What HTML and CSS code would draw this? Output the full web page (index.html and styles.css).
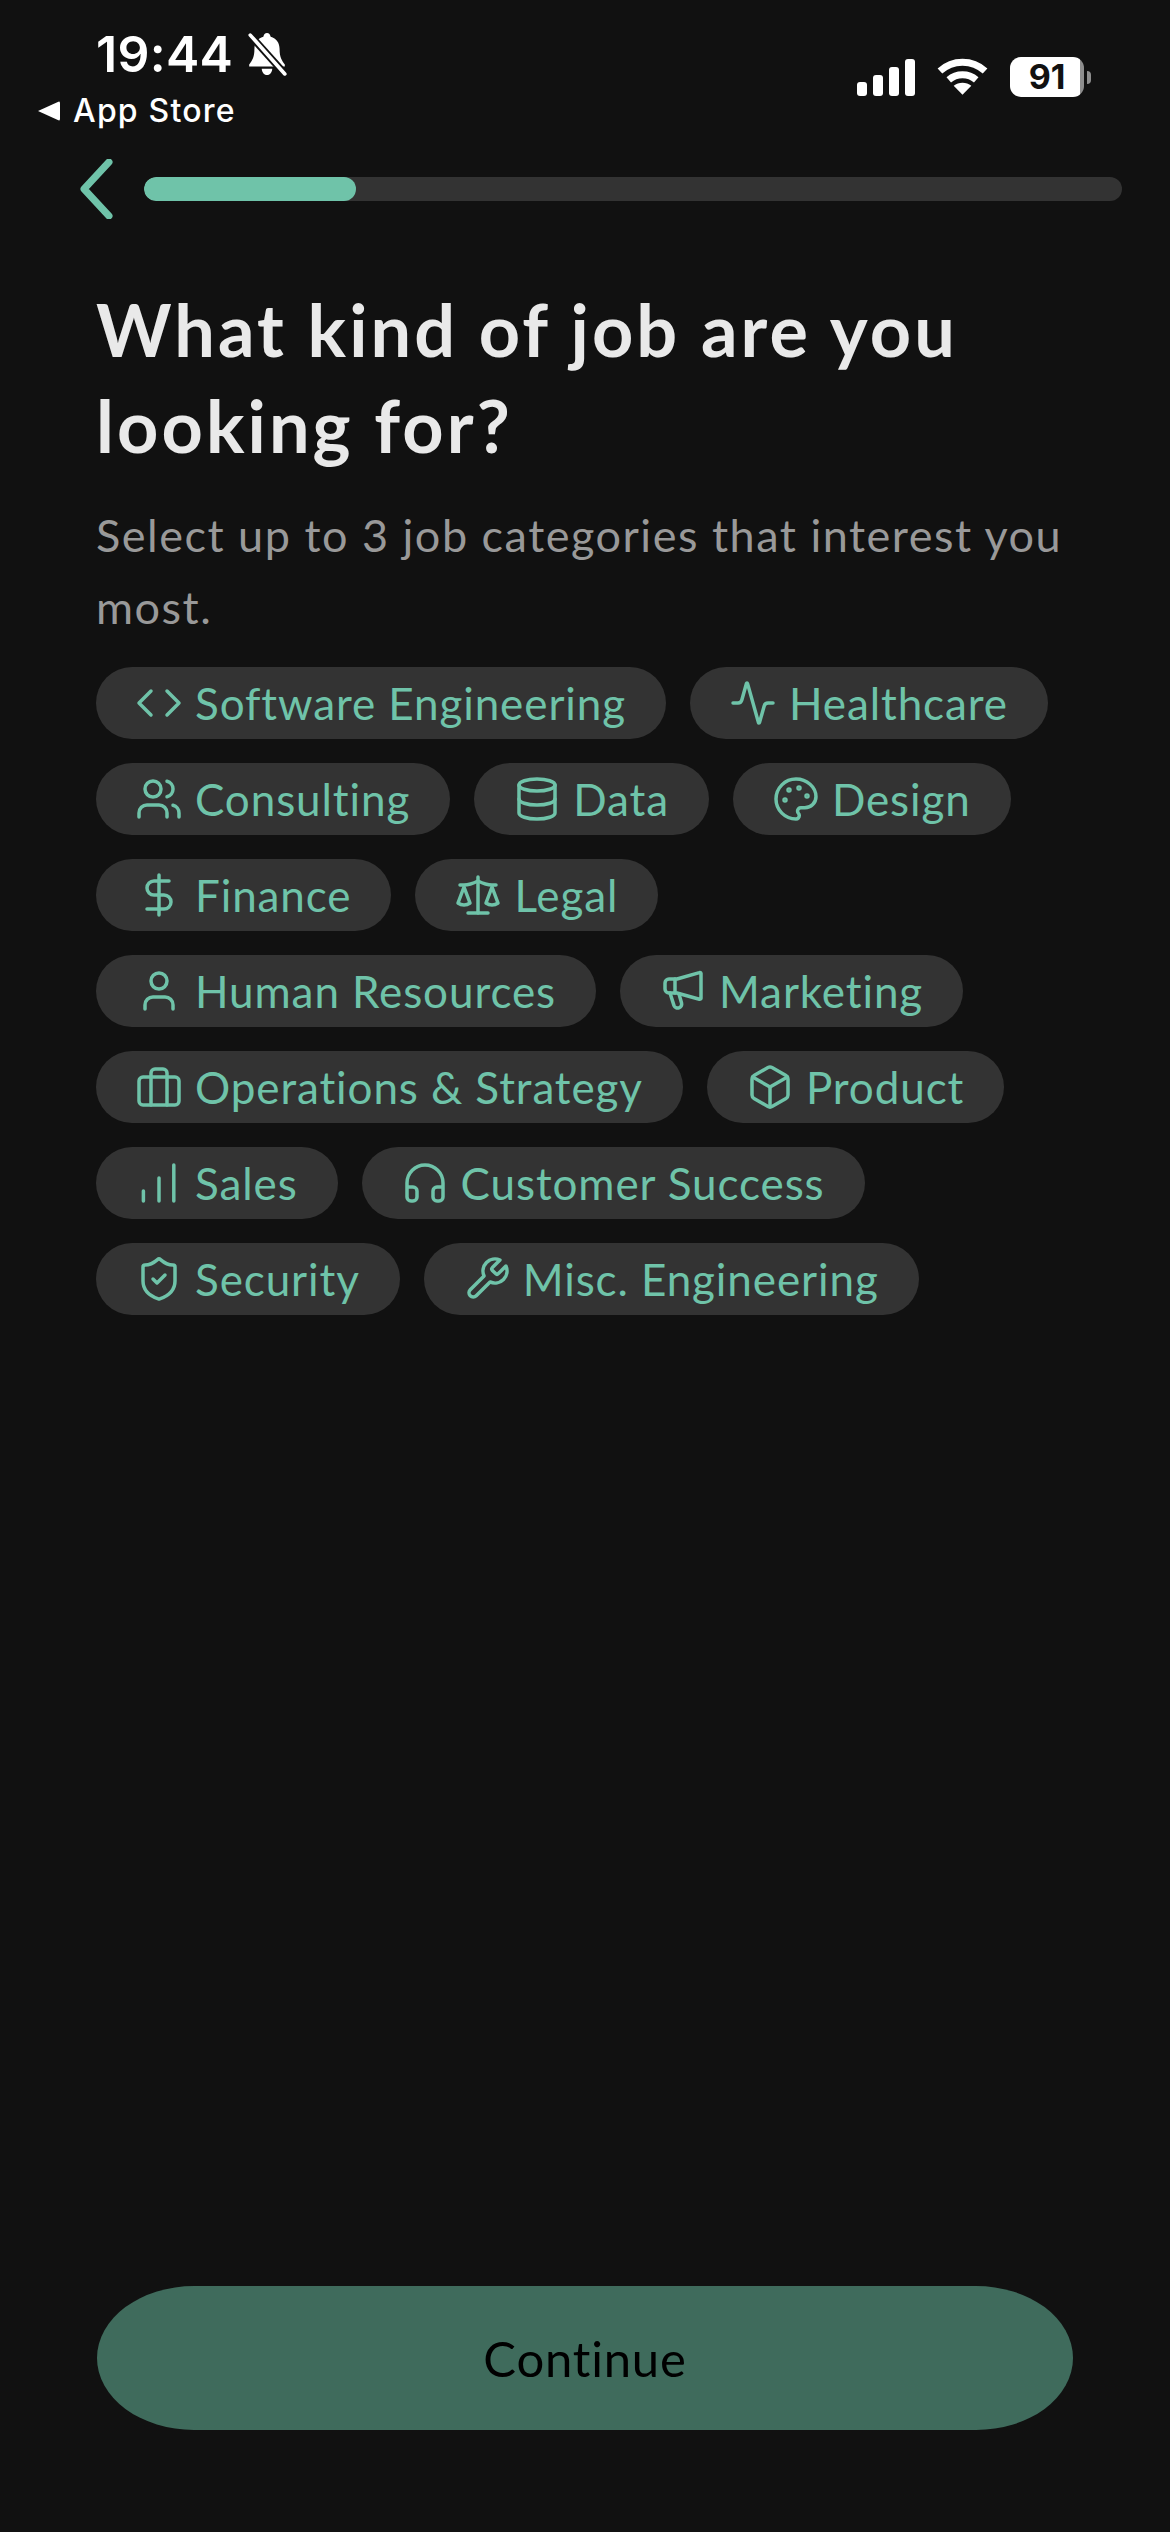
FILE: index.html
```html
<!DOCTYPE html>
<html>
<head>
  <title>Job categories</title>
  <meta name="viewport" content="width=device-width, initial-scale=1.0">
  <link rel="stylesheet" href="styles.css">
</head>
<body>
  <div class="screen">
    <div class="status-bar">
      <div class="status-left">
        <div class="time-row">
          <span class="time">19:44</span>
          <svg class="bell" viewBox="0 0 38 42">
            <path fill="#fff" d="M19 1c2 0 3 1.500 3.500 3.500C28 6 31 10.500 31 16c0 8 2 11 5 15v2H2v-2c3-4 5-7 5-15 0-5.500 3-10 8.500-11.500C16 2.500 17 1 19 1z"/>
            <path fill="#fff" d="M14 35h10c0 3-2 6-5 6s-5-3-5-6z"/>
            <path stroke="#111" stroke-width="7" d="M2 2l34 38"/>
            <path stroke="#fff" stroke-width="3.500" stroke-linecap="round" d="M3 3l33 37"/>
          </svg>
        </div>
        <div class="app-store">
          <span class="back-arrow"></span>
          <span>App Store</span>
        </div>
      </div>
      <div class="status-right">
        <div class="signal">
          <span class="bar bar-1"></span>
          <span class="bar bar-2"></span>
          <span class="bar bar-3"></span>
          <span class="bar bar-4"></span>
        </div>
        <svg class="wifi" viewBox="0 0 52 38">
          <path fill="none" stroke="#fff" stroke-width="7" d="M3 14C16 2 36 2 49 14"/>
          <path fill="none" stroke="#fff" stroke-width="7" d="M12 23c8-7 20-7 28 0"/>
          <path fill="#fff" d="M26 38l-9-9c5-4 13-4 18 0z"/>
        </svg>
        <div class="battery">
          <div class="battery-body">91</div>
          <div class="battery-nub"></div>
        </div>
      </div>
    </div>

    <div class="nav">
      <svg class="back" viewBox="0 0 36 60">
        <path d="M31 3L6 30l25 27"/>
      </svg>
      <div class="progress"><div class="progress-fill"></div></div>
    </div>

    <div class="content">
      <h1>What kind of job are you looking for?</h1>
      <p class="sub">Select up to 3 job categories that interest you most.</p>

      <div class="chips">
        <div class="chip">
          <svg class="icon" viewBox="0 0 24 24"><polyline points="16 18 22 12 16 6"/><polyline points="8 6 2 12 8 18"/></svg>
          <span>Software Engineering</span>
        </div>
        <div class="chip">
          <svg class="icon" viewBox="0 0 24 24"><path d="M22 12h-2.480a2 2 0 0 0-1.930 1.460l-2.350 8.360a.25.25 0 0 1-.48 0L9.240 2.180a.25.25 0 0 0-.48 0l-2.350 8.360A2 2 0 0 1 4.490 12H2"/></svg>
          <span>Healthcare</span>
        </div>
        <div class="chip">
          <svg class="icon" viewBox="0 0 24 24"><path d="M16 21v-2a4 4 0 0 0-4-4H6a4 4 0 0 0-4 4v2"/><circle cx="9" cy="7" r="4"/><path d="M22 21v-2a4 4 0 0 0-3-3.870"/><path d="M16 3.130a4 4 0 0 1 0 7.750"/></svg>
          <span>Consulting</span>
        </div>
        <div class="chip">
          <svg class="icon" viewBox="0 0 24 24"><ellipse cx="12" cy="5" rx="9" ry="3"/><path d="M3 5V19A9 3 0 0 0 21 19V5"/><path d="M3 12A9 3 0 0 0 21 12"/></svg>
          <span>Data</span>
        </div>
        <div class="chip">
          <svg class="icon" viewBox="0 0 24 24"><circle class="dot" cx="13.500" cy="6.500" r=".5"/><circle class="dot" cx="17.500" cy="10.500" r=".5"/><circle class="dot" cx="8.500" cy="7.500" r=".5"/><circle class="dot" cx="6.500" cy="12.500" r=".5"/><path d="M12 2C6.500 2 2 6.500 2 12s4.500 10 10 10c.926 0 1.648-.746 1.648-1.688 0-.437-.18-.835-.437-1.125-.29-.289-.438-.652-.438-1.125a1.640 1.640 0 0 1 1.668-1.668h1.996c3.051 0 5.555-2.503 5.555-5.554C21.965 6.012 17.461 2 12 2z"/></svg>
          <span>Design</span>
        </div>
        <div class="chip">
          <svg class="icon" viewBox="0 0 24 24"><line x1="12" y1="2" x2="12" y2="22"/><path d="M17 5H9.500a3.500 3.500 0 0 0 0 7h5a3.500 3.500 0 0 1 0 7H6"/></svg>
          <span>Finance</span>
        </div>
        <div class="chip">
          <svg class="icon" viewBox="0 0 24 24"><path d="m16 16 3-8 3 8c-.87.65-1.920 1-3 1s-2.130-.35-3-1Z"/><path d="m2 16 3-8 3 8c-.87.65-1.920 1-3 1s-2.130-.35-3-1Z"/><path d="M7 21h10"/><path d="M12 3v18"/><path d="M3 7h2c2 0 5-1 7-2 2 1 5 2 7 2h2"/></svg>
          <span>Legal</span>
        </div>
        <div class="chip">
          <svg class="icon" viewBox="0 0 24 24"><path d="M19 21v-2a4 4 0 0 0-4-4H9a4 4 0 0 0-4 4v2"/><circle cx="12" cy="7" r="4"/></svg>
          <span>Human Resources</span>
        </div>
        <div class="chip">
          <svg class="icon" viewBox="0 0 24 24"><path d="M21 3.200v12.400a.6.6 0 0 1-.8.5L9 13H5a2 2 0 0 1-2-2V8a2 2 0 0 1 2-2h4l11.200-3.200a.6.6 0 0 1 .8.4z"/><path d="M8 6v7"/><path d="M5.500 13l2 6.300a2 2 0 0 0 3.800-1.200L10 13.500"/></svg>
          <span>Marketing</span>
        </div>
        <div class="chip">
          <svg class="icon" viewBox="0 0 24 24"><rect x="2" y="7" width="20" height="14" rx="2" ry="2"/><path d="M16 21V5a2 2 0 0 0-2-2h-4a2 2 0 0 0-2 2v16"/></svg>
          <span>Operations &amp; Strategy</span>
        </div>
        <div class="chip">
          <svg class="icon" viewBox="0 0 24 24"><path d="M21 8a2 2 0 0 0-1-1.730l-7-4a2 2 0 0 0-2 0l-7 4A2 2 0 0 0 3 8v8a2 2 0 0 0 1 1.730l7 4a2 2 0 0 0 2 0l7-4A2 2 0 0 0 21 16Z"/><path d="m3.300 7 8.700 5 8.700-5"/><path d="M12 22V12"/></svg>
          <span>Product</span>
        </div>
        <div class="chip">
          <svg class="icon" viewBox="0 0 24 24"><path d="M4.200 21v-5"/><path d="M12 21V9.500"/><path d="M19.400 21V3"/></svg>
          <span>Sales</span>
        </div>
        <div class="chip">
          <svg class="icon" viewBox="0 0 24 24"><path d="M3 14h3a2 2 0 0 1 2 2v3a2 2 0 0 1-2 2H5a2 2 0 0 1-2-2v-7a9 9 0 0 1 18 0v7a2 2 0 0 1-2 2h-1a2 2 0 0 1-2-2v-3a2 2 0 0 1 2-2h3"/></svg>
          <span>Customer Success</span>
        </div>
        <div class="chip">
          <svg class="icon" viewBox="0 0 24 24"><path d="M20 13c0 5-3.500 7.500-7.660 8.950a1 1 0 0 1-.67-.01C7.500 20.500 4 18 4 13V6a1 1 0 0 1 1-1c2 0 4.500-1.200 6.240-2.720a1.170 1.170 0 0 1 1.520 0C14.510 3.810 17 5 19 5a1 1 0 0 1 1 1z"/><path d="m9 12 2 2 4-4"/></svg>
          <span>Security</span>
        </div>
        <div class="chip">
          <svg class="icon" viewBox="0 0 24 24"><path d="M14.700 6.300a1 1 0 0 0 0 1.400l1.600 1.600a1 1 0 0 0 1.400 0l3.770-3.770a6 6 0 0 1-7.940 7.940l-6.910 6.910a2.120 2.120 0 0 1-3-3l6.910-6.910a6 6 0 0 1 7.940-7.940l-3.760 3.760z"/></svg>
          <span>Misc. Engineering</span>
        </div>
      </div>
    </div>

    <button class="continue">Continue</button>
  </div>
</body>
</html>
```

FILE: styles.css
```css
* {
  margin: 0;
  padding: 0;
  box-sizing: border-box;
}

body {
  background: #111111;
  font-family: "Lato", "Noto Sans", sans-serif;
  font-variant-ligatures: none;
}

.screen {
  height: 2532px;
  display: flex;
  flex-direction: column;
  padding-bottom: 102px;
}

.status-bar {
  display: flex;
  justify-content: space-between;
  height: 161px;
  padding: 26px 79px 0 38px;
  color: #fff;
  font-family: "Inter", sans-serif;
}

.time-row {
  display: flex;
  align-items: center;
  gap: 14px;
  padding-left: 58px;
  height: 56px;
}

.time {
  font-size: 50px;
  font-weight: 600;
  letter-spacing: 0.3px;
}

.bell {
  width: 40px;
  height: 44px;
}

.app-store {
  display: flex;
  align-items: center;
  gap: 13px;
  margin-top: 9px;
  font-size: 32px;
  font-weight: 500;
  letter-spacing: 1.2px;
  line-height: 40px;
}

.back-arrow {
  width: 0;
  height: 0;
  border-top: 10px solid transparent;
  border-bottom: 10px solid transparent;
  border-right: 22px solid #fff;
  border-radius: 2px;
}

.status-right {
  display: flex;
  align-items: flex-start;
  padding-top: 31px;
  gap: 22px;
}

.signal {
  display: flex;
  align-items: flex-end;
  gap: 6px;
  height: 38px;
  margin-top: 1px;
}

.bar {
  width: 10px;
  background: #fff;
  border-radius: 3px;
}

.bar-1 { height: 14px; }
.bar-2 { height: 21px; }
.bar-3 { height: 29px; }
.bar-4 { height: 37px; }

.wifi {
  width: 51px;
  height: 38px;
}

.battery {
  display: flex;
  align-items: center;
  gap: 3px;
  height: 40px;
}

.battery-body {
  width: 74px;
  height: 40px;
  background: linear-gradient(90deg, #fff 0, #fff 94%, #8e8e8e 94%);
  border-radius: 11px;
  color: #111;
  font-size: 34px;
  font-weight: 700;
  line-height: 40px;
  text-align: center;
}

.battery-nub {
  width: 4px;
  height: 13px;
  background: #8e8e8e;
  border-radius: 0 4px 4px 0;
}

.nav {
  display: flex;
  align-items: center;
  height: 56px;
  padding: 0 48px 0 78px;
  gap: 30px;
}

.back {
  width: 36px;
  height: 60px;
  fill: none;
  stroke: #6fc3a9;
  stroke-width: 7;
  stroke-linecap: round;
  stroke-linejoin: round;
}

.progress {
  flex: 1;
  height: 24px;
  background: #333333;
  border-radius: 12px;
  overflow: hidden;
}

.progress-fill {
  width: 212px;
  height: 100%;
  background: #6fc3a9;
  border-radius: 12px;
}

.content {
  flex: 1;
  padding: 64px 96px 0;
}

h1 {
  color: #e9e9e9;
  font-size: 72px;
  font-weight: 700;
  letter-spacing: 3.1px;
  line-height: 96px;
}

.sub {
  color: #999999;
  font-size: 45px;
  letter-spacing: 1.5px;
  line-height: 72px;
  margin-top: 26px;
}

.chips {
  display: flex;
  flex-wrap: wrap;
  gap: 24px;
  margin-top: 24px;
}

.chip {
  display: flex;
  align-items: center;
  gap: 12px;
  height: 72px;
  padding: 0 40px 0 39px;
  background: #333333;
  border-radius: 36px;
  color: #6fc3a9;
  font-size: 44px;
  letter-spacing: 0.9px;
  white-space: nowrap;
}

.icon {
  width: 48px;
  height: 48px;
  fill: none;
  stroke: #6fc3a9;
  stroke-width: 1.75;
  stroke-linecap: round;
  stroke-linejoin: round;
  flex-shrink: 0;
}

.icon .dot {
  fill: #6fc3a9;
}

.continue {
  display: block;
  height: 144px;
  margin: 0 97px;
  background: #3f6b5c;
  border: none;
  border-radius: 97px / 72px;
  color: #000;
  font-family: inherit;
  font-size: 49px;
  letter-spacing: 0.8px;
}
```
